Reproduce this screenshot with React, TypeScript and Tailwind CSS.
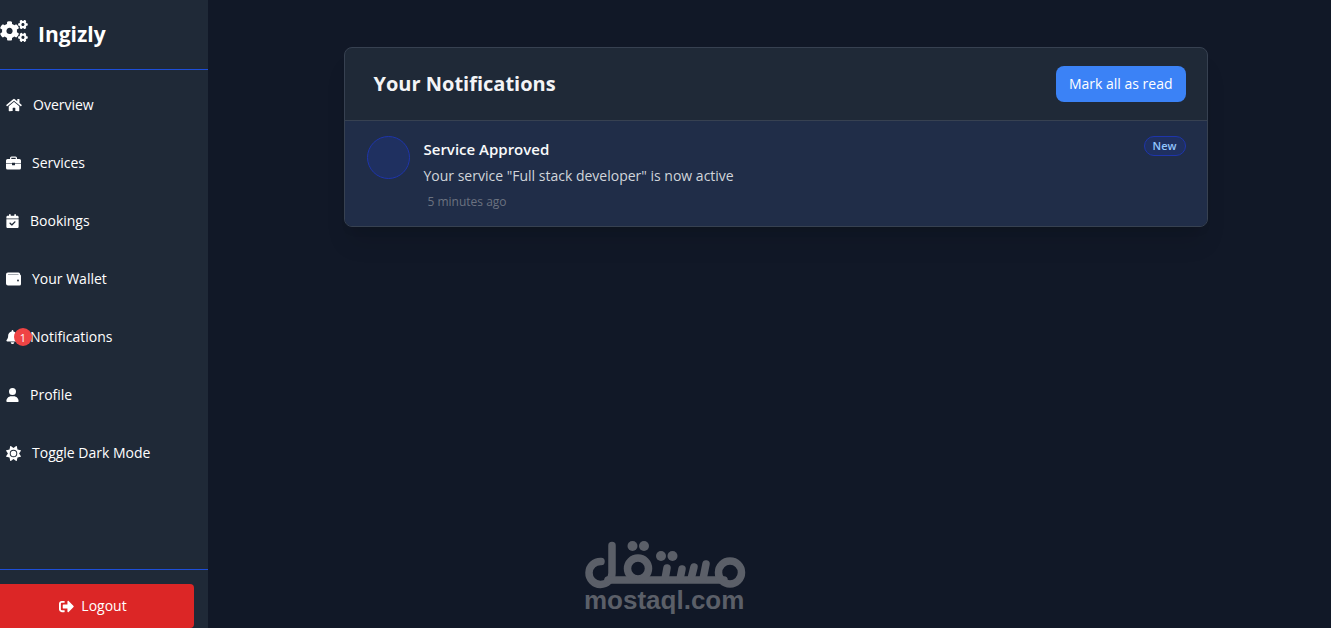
import React from "react";
import { FaCogs, FaHome, FaSignOutAlt } from "react-icons/fa";
import { FaBell, FaCalendarCheck, FaSun, FaUser } from "react-icons/fa6";

type IconProps = { className?: string };

const BriefcaseIcon = ({ className }: IconProps) => (
  <svg className={className} viewBox="0 0 15 14" fill="currentColor" aria-hidden="true">
    <path d="M4 3V2Q4 .5 5.500 .5H9.500Q11 .5 11 2V3H13.500Q15 3 15 4.500V7.300H9V6.800H6V7.300H0V4.500Q0 3 1.500 3ZM5.300 3H9.700V1.800H5.300Z" />
    <path d="M0 7.800H6V8.700Q6 9.200 6.500 9.200H8.500Q9 9.200 9 8.700V7.800H15V12Q15 13.500 13.500 13.500H1.500Q0 13.500 0 12Z" />
  </svg>
);

const WalletIcon = ({ className }: IconProps) => (
  <svg className={className} viewBox="0 0 15 14" fill="currentColor" aria-hidden="true">
    <path d="M2 .5H12.500Q14 .5 14 2V2.500Q15 2.800 15 4V12Q15 13.500 13.500 13.500H2Q0 13.500 0 11.500V2.500Q0 .5 2 .5Z" />
    <path d="M2 2.500H12.500" stroke="#1f2937" strokeOpacity=".4" strokeWidth="1" />
    <circle cx="12" cy="8.500" r=".9" fill="#1f2937" />
  </svg>
);

type NavItem = {
  label: string;
  icon: React.ComponentType<IconProps>;
  box: string;
  count?: number;
};

const navItems: NavItem[] = [
  { label: "Overview", icon: FaHome, box: "w-4" },
  { label: "Services", icon: BriefcaseIcon, box: "w-[15px]" },
  { label: "Bookings", icon: FaCalendarCheck, box: "w-[13px]" },
  { label: "Your Wallet", icon: WalletIcon, box: "w-[15px]" },
  { label: "Notifications", icon: FaBell, box: "w-[13px]", count: 1 },
  { label: "Profile", icon: FaUser, box: "w-[13px]" },
];

const itemClass = "flex w-full items-center gap-[11px] px-[6px] py-[18px] text-left text-sm leading-[22px]";

const Sidebar = () => {
  return (
    <aside className="flex w-52 shrink-0 flex-col bg-[#1f2937] text-white">
      <div className="flex h-[70px] items-center border-b border-[#1d4ed8]">
        <div className="flex items-baseline gap-[10px]">
          <FaCogs className="h-[22px] w-7" />
          <span className="text-[21px] font-bold">Ingizly</span>
        </div>
      </div>

      <nav className="flex grow flex-col pt-[6px]">
        {navItems.map(({ label, icon: Icon, box, count }) => (
          <a key={label} href="#" className={itemClass}>
            <span className={`relative flex h-[14px] shrink-0 justify-center ${box}`}>
              <Icon className="h-[14px] w-full" />
              {count && (
                <span className="absolute -top-[2px] left-2 flex size-[18px] items-center justify-center rounded-full bg-[#ef4444] text-[11px] leading-none">
                  {count}
                </span>
              )}
            </span>
            {label}
          </a>
        ))}
        <button type="button" className={itemClass}>
          <FaSun className="size-[15px] shrink-0" />
          Toggle Dark Mode
        </button>
      </nav>

      <div className="border-t border-[#1d4ed8] pt-[14px] pr-[14px]">
        <button type="button" className="flex h-11 w-full items-center justify-center gap-[7px] rounded-r bg-[#dc2626] pr-2 text-sm">
          <FaSignOutAlt size={15} />
          Logout
        </button>
      </div>
    </aside>
  );
};

const Notifications = () => {
  return (
    <section className="w-full max-w-[864px] overflow-hidden rounded-lg border border-[#374151] bg-[#1f2937] shadow-xl">
      <header className="flex items-center justify-between border-b border-[#374151] py-[18px] pr-[21px] pl-[29px]">
        <h1 className="text-xl leading-9 font-bold text-[#f3f4f6]">Your Notifications</h1>
        <button type="button" className="h-9 rounded-lg bg-[#3b82f6] px-[13px] text-sm text-white">
          Mark all as read
        </button>
      </header>

      <article className="flex items-start gap-[14px] bg-[#202d48] px-[21px] pt-[15px] pb-[13px]">
        <div className="ml-px size-[43px] shrink-0 rounded-full border border-[#1e35ab] bg-[#1f3060]" />
        <div className="grow">
          <h2 className="text-[15px] leading-[27px] font-semibold text-[#f9fafb]">Service Approved</h2>
          <p className="text-sm leading-[26px] text-[#d1d5db]">Your service "Full stack developer" is now active</p>
          <time className="block pt-[2px] pl-1 text-xs leading-[22px] text-[#6b7280]">5 minutes ago</time>
        </div>
        <span className="flex h-5 items-center rounded-full border border-[#1e35ab] bg-[#1f3060] px-2 text-[11px] font-semibold text-[#93c5fd]">
          New
        </span>
      </article>
    </section>
  );
};

const MostaqlLogo = () => {
  return (
    <svg width="162" height="76" viewBox="0 0 162 76" role="img" aria-label="mostaql" className="text-[#5b5f68]">
      <g fill="none" stroke="currentColor" strokeWidth="7.5" strokeLinecap="round" strokeLinejoin="round">
        <path d="M17 21.500a11.500 11.500 0 1 0 11 11.500V5.500" />
        <path d="M24 40H140" />
        <circle cx="54" cy="28.500" r="10.500" />
        <path d="M83 28L81 39M98 29L96 39M110 27L107 39M122 24L119 39" />
        <circle cx="146" cy="32.500" r="11.500" />
      </g>
      <g fill="currentColor">
        <circle cx="48.500" cy="6" r="5" />
        <circle cx="60" cy="6" r="5" />
        <circle cx="77" cy="16" r="5" />
        <circle cx="88.500" cy="16" r="5" />
        <text x="0" y="69" fontSize="26" fontWeight="bold" fontFamily="Liberation Sans, Arial, sans-serif">
          mostaql.com
        </text>
      </g>
    </svg>
  );
};

export default function App() {
  return (
    <div className="flex min-h-screen bg-[#111827] font-['Segoe_UI','Open_Sans',sans-serif]">
      <Sidebar />
      <main className="flex grow flex-col items-center px-16 pt-[47px]">
        <div className="flex w-full justify-center pl-3">
          <Notifications />
        </div>
        <div className="mt-auto mr-[210px] pb-[12px]">
          <MostaqlLogo />
        </div>
      </main>
    </div>
  );
}
